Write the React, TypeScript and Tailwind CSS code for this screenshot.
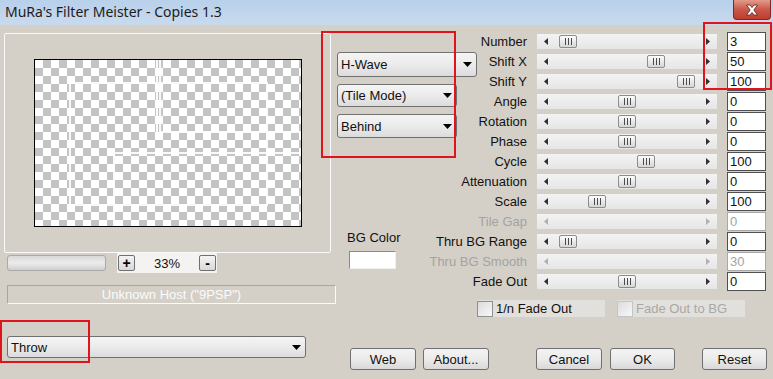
import React from "react";

type Row = { label: string; value: string; thumb: number | null; disabled?: boolean };

const rows: Row[] = [
  { label: "Number", value: "3", thumb: 22 },
  { label: "Shift X", value: "50", thumb: 110 },
  { label: "Shift Y", value: "100", thumb: 140 },
  { label: "Angle", value: "0", thumb: 81 },
  { label: "Rotation", value: "0", thumb: 81 },
  { label: "Phase", value: "0", thumb: 81 },
  { label: "Cycle", value: "100", thumb: 100 },
  { label: "Attenuation", value: "0", thumb: 81 },
  { label: "Scale", value: "100", thumb: 51 },
  { label: "Tile Gap", value: "0", thumb: null, disabled: true },
  { label: "Thru BG Range", value: "0", thumb: 22 },
  { label: "Thru BG Smooth", value: "30", thumb: null, disabled: true },
  { label: "Fade Out", value: "0", thumb: 81 },
];

function Caret() {
  return (
    <svg width="9" height="5" viewBox="0 0 9 5" className="shrink-0">
      <path d="M0 0 H9 L4.5 5 Z" fill="#000" />
    </svg>
  );
}

function Combo({ text, w, h }: { text: string; w: string; h: string }) {
  return (
    <div
      className={`${w} ${h} flex items-center justify-between rounded-[3px] border border-[#707070] bg-gradient-to-b from-[#f4f4f4] via-[#ebebeb] to-[#dcdcdc] pl-[3px] pr-[4px] text-[#111]`}
    >
      <span>{text}</span>
      <Caret />
    </div>
  );
}

function Thumb({ left }: { left: number }) {
  return (
    <div
      className="absolute top-[1px] h-[13px] w-[18px] rounded-[2px] border border-[#8c8c8c] bg-gradient-to-b from-[#fdfdfd] to-[#d6d6d6] flex items-center justify-center gap-[2px]"
      style={{ left }}
    >
      <div className="h-[7px] w-[1px] bg-[#4a4a4a]" />
      <div className="h-[7px] w-[1px] bg-[#4a4a4a]" />
      <div className="h-[7px] w-[1px] bg-[#4a4a4a]" />
    </div>
  );
}

function Track({ thumb, disabled }: { thumb: number | null; disabled?: boolean }) {
  const c = disabled ? "#b0b0b0" : "#303030";
  return (
    <div className="relative ml-[10px] h-[15px] w-[180px] bg-gradient-to-b from-[#f3f3f3] to-[#e6e6e6] flex items-center justify-between px-[7px]">
      <svg width="4" height="7" viewBox="0 0 4 7">
        <path d="M4 0 V7 L0 3.5 Z" fill={c} />
      </svg>
      <svg width="4" height="7" viewBox="0 0 4 7">
        <path d="M0 0 V7 L4 3.5 Z" fill={c} />
      </svg>
      {thumb !== null && <Thumb left={thumb} />}
    </div>
  );
}

function Button({ text, w, className = "" }: { text: string; w: string; className?: string }) {
  return (
    <div
      className={`${w} h-[22px] flex items-center justify-center rounded-[3px] border border-[#707070] bg-gradient-to-b from-[#f3f3f3] via-[#ebebeb] to-[#d9d9d9] text-[#111] ${className}`}
    >
      {text}
    </div>
  );
}

function Check({ text, disabled, className = "" }: { text: string; disabled?: boolean; className?: string }) {
  return (
    <div className={`w-[128px] h-[17px] flex items-center bg-[#e2e0dc] ${className}`}>
      <div
        className={`h-[16px] w-[16px] border ${disabled ? "border-[#c4c4c4]" : "border-[#8e8f8f]"} bg-gradient-to-br from-[#dcdcdc] to-[#f8f8f8]`}
      />
      <span className={`ml-[3px] ${disabled ? "text-[#a8a8a8]" : "text-[#111]"}`}>{text}</span>
    </div>
  );
}

export default function App() {
  return (
    <div className="relative w-[773px] h-[379px] overflow-hidden bg-[#d4d0c8] font-['Liberation_Sans',Arial,sans-serif] text-[13px] leading-[15px]">
      {/* Title bar */}
      <div className="h-[25px] flex items-start bg-gradient-to-b from-[#b8d0ea] to-[#c9daed]">
        <div className="pl-[5px] pt-[3px] text-[14px] leading-[18px] text-[#1c1c1c] font-['Noto_Sans',sans-serif]">
          MuRa's Filter Meister - Copies 1.3
        </div>
        <div className="ml-auto mr-[2px] h-[20px] w-[38px] rounded-b-[4px] border border-t-0 border-[#7a2a22] bg-gradient-to-b from-[#e39b8c] via-[#c9574a] to-[#c23b2c] flex items-center justify-center">
          <svg width="14" height="12" viewBox="0 0 14 12">
            <path
              d="M1.5 1 L5 1 L7 3.6 L9 1 L12.5 1 L8.8 6 L12.5 11 L9 11 L7 8.4 L5 11 L1.5 11 L5.2 6 Z"
              fill="#fff"
              stroke="#5a1f19"
              strokeWidth="0.8"
              strokeLinejoin="round"
            />
          </svg>
        </div>
      </div>

      <div className="flex">
        {/* Left column */}
        <div className="w-[337px] shrink-0 pl-[4px] pt-[8px] flex flex-col">
          <div className="w-[327px] h-[220px] rounded-[2px] border border-[#fafafa] pl-[29px] pt-[25px]">
            <div className="relative w-[268px] h-[168px] border border-black bg-[conic-gradient(#c4c4c4_25%,#ffffff_0_50%,#c4c4c4_0_75%,#ffffff_0)] bg-[length:16px_16px]">
              <svg className="absolute inset-0" width="266" height="166" viewBox="0 0 266 166">
                <g stroke="#ffffff" strokeWidth="2" fill="none" opacity="0.9">
                  <path d="M122 0 V73 M125 0 V72 H266" />
                  <path d="M35 23 H232 V145 H35 Z" />
                  <path d="M79 166 V93 H266" />
                </g>
              </svg>
            </div>
          </div>
          <div className="h-[20px] flex items-center pl-[3px]">
            <div className="w-[99px] h-[16px] rounded-[3px] border border-[#a9a9a9] bg-gradient-to-b from-[#d8d8d8] via-[#ececec] to-[#cfcfcf]" />
            <div className="ml-[11px] w-[100px] h-[20px] bg-[#f4f3f1] flex items-center">
              <div className="ml-[1px] w-[17px] h-[16px] rounded-[2px] border border-[#707070] bg-gradient-to-b from-[#f4f4f4] to-[#d8d8d8] flex items-center justify-center text-[14px] font-bold leading-none">
                +
              </div>
              <div className="flex-1 text-center text-[#111]">33%</div>
              <div className="mr-[1px] w-[17px] h-[16px] rounded-[2px] border border-[#707070] bg-gradient-to-b from-[#f4f4f4] to-[#d8d8d8] flex items-center justify-center text-[14px] font-bold leading-none">
                -
              </div>
            </div>
          </div>
          <div className="ml-[3px] mt-[12px] w-[329px] h-[19px] border border-t-[#a6a6a6] border-l-[#a6a6a6] border-b-[#fafafa] border-r-[#fafafa] flex items-center justify-center text-[#fbfbfb]">
            Unknown Host ("9PSP")
          </div>
          <div className="ml-[3px] mt-[32px]">
            <Combo text="Throw" w="w-[299px]" h="h-[22px]" />
          </div>
        </div>

        {/* Right area */}
        <div className="flex-1 flex flex-col">
          <div className="flex">
            {/* Middle column */}
            <div className="w-[140px] shrink-0 pt-[27px] flex flex-col">
              <Combo text="H-Wave" w="w-[140px]" h="h-[25px]" />
              <div className="mt-[7px]">
                <Combo text="(Tile Mode)" w="w-[120px]" h="h-[23px]" />
              </div>
              <div className="mt-[7px]">
                <Combo text="Behind" w="w-[120px]" h="h-[24px]" />
              </div>
              <div className="mt-[92px] ml-[10px] text-[#111]">BG Color</div>
              <div className="mt-[6px] ml-[12px] w-[47px] h-[18px] bg-white border border-t-[#8a8a8a] border-l-[#8a8a8a] border-b-[#f0f0f0] border-r-[#f0f0f0]" />
            </div>
            {/* Sliders */}
            <div className="pt-[7px] flex flex-col gap-[1px]">
              {rows.map((r) => (
                <div key={r.label} className="h-[19px] flex items-center">
                  <div className={`w-[50px] flex justify-end whitespace-nowrap ${r.disabled ? "text-[#a3a3a3]" : "text-[#111]"}`}>
                    {r.label}
                  </div>
                  <Track thumb={r.thumb} disabled={r.disabled} />
                  <div
                    className={`ml-[10px] w-[39px] h-[19px] bg-white border pl-[2px] flex items-center ${
                      r.disabled ? "border-[#a8a8a8] text-[#a3a3a3]" : "border-[#505050] text-[#111]"
                    }`}
                  >
                    {r.value}
                  </div>
                </div>
              ))}
            </div>
          </div>
          <div className="mt-[9px] ml-[140px] flex">
            <Check text="1/n Fade Out" />
            <Check text="Fade Out to BG" disabled className="ml-[12px]" />
          </div>
          <div className="mt-[31px] flex">
            <Button text="Web" w="w-[66px]" className="ml-[13px]" />
            <Button text="About..." w="w-[66px]" className="ml-[7px]" />
            <Button text="Cancel" w="w-[66px]" className="ml-[47px]" />
            <Button text="OK" w="w-[65px]" className="ml-[8px]" />
            <Button text="Reset" w="w-[65px]" className="ml-[27px]" />
          </div>
        </div>
      </div>

      {/* Red annotation rectangles */}
      <div className="absolute left-[321px] top-[31px] w-[135px] h-[127px] border-[2px] border-[#e0141c]" />
      <div className="absolute left-[703px] top-[22px] w-[69px] h-[68px] border-[2px] border-[#e0141c]" />
      <div className="absolute left-[0px] top-[320px] w-[90px] h-[43px] border-[2px] border-[#e0141c]" />
    </div>
  );
}
